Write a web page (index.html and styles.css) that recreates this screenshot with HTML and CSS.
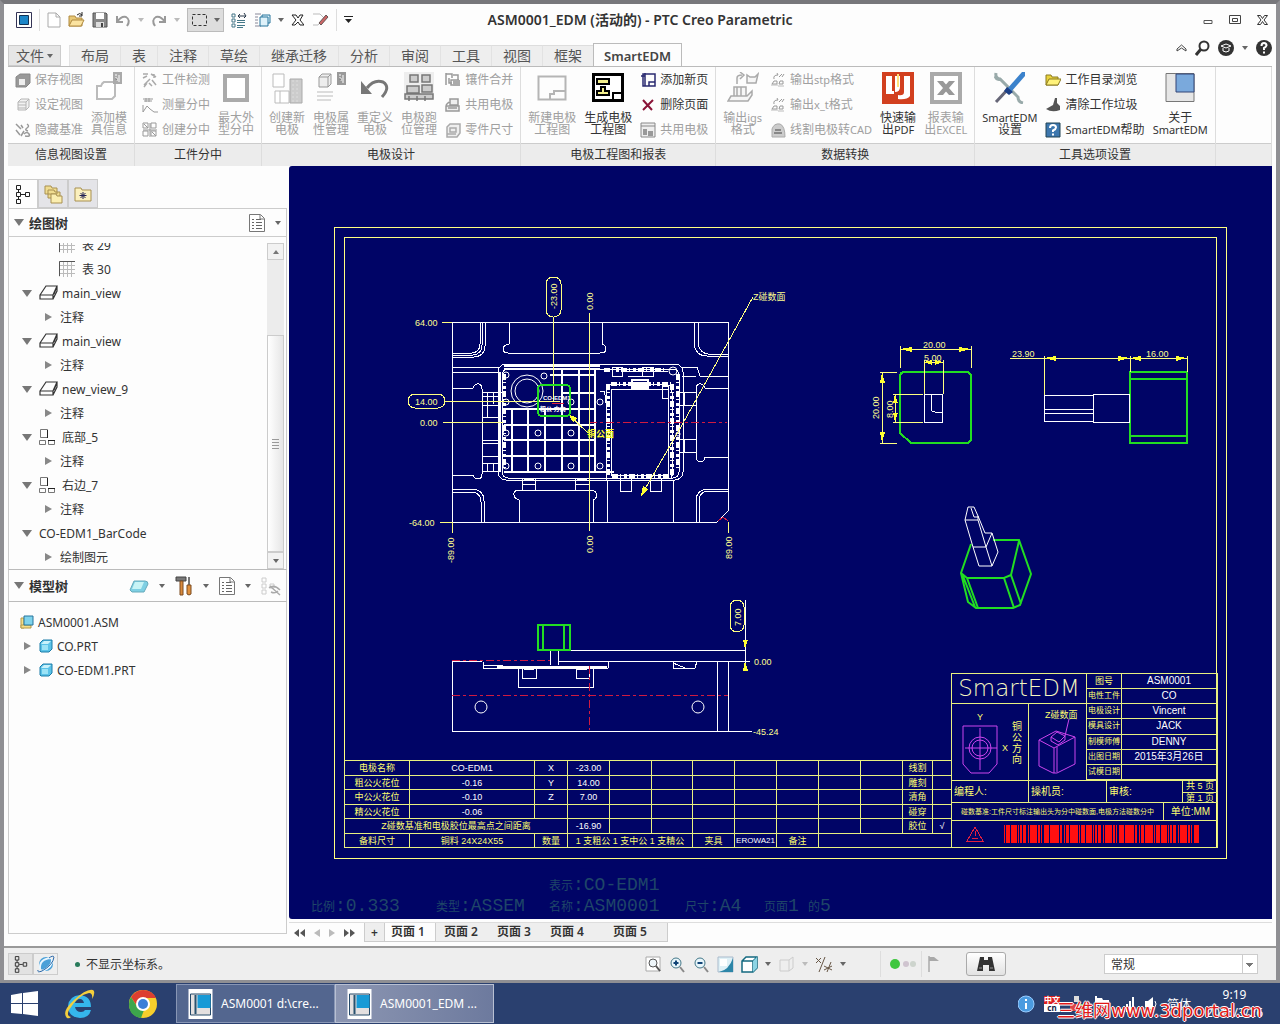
FILE: index.html
```html
<!DOCTYPE html>
<html lang="zh-CN">
<head>
    <meta charset="UTF-8">
    <meta name="viewport" content="width=device-width, initial-scale=1.0">
    <title>ASM0001_EDM (活动的) - PTC Creo Parametric</title>
    <link rel="stylesheet" href="styles.css">
</head>
<body>
    <!-- 公用图标 -->
    <svg class="defs" width="0" height="0" aria-hidden="true">
        <symbol id="i-view" viewBox="0 0 20 16"><path d="M1 10 7 1h11l-4 9v4H1zM1 10h13M18 1v5l-4 8M15 9l2-5" fill="none" stroke="#333" stroke-width="1.2"/></symbol>
        <symbol id="i-proj" viewBox="0 0 16 16"><path d="M1.500 .5h7v8h-7zM.5 11.500h6v4h-6zM9.500 11.500h6v4h-6z" fill="none" stroke="#777"/><path d="M9 11.500h7M8.500 1v8" stroke="#222"/></symbol>
        <symbol id="i-table" viewBox="0 0 16 16"><path d="M.5.500h15M.5.500v15M4.500 1v15M8.500 1v15M12.500 1v15M1 4.500h15M1 8.500h15M1 12.500h15" fill="none" stroke="#bbb"/><path d="M.5 15V.500H16" fill="none" stroke="#555"/></symbol>
        <symbol id="i-part" viewBox="0 0 14 14"><path d="M1 4 4 1h9v9l-3 3H2L1 12z" fill="#5bc3e8" stroke="#1d7ca8"/><path d="M2 5h7l3-3H5z" fill="#c9f2fb"/><path d="M3 6h6v5H3z" fill="#9be3f6"/></symbol>
        <symbol id="i-nodes" viewBox="0 0 16 20"><path d="M1.500 1.500h4v4h-4zM1.500 8.500h4v4h-4zM1.500 15.500h4v4h-4zM10.500 8.500h4v4h-4zM3.500 5.500v3M3.500 12.500v3M6 10.500h4" fill="none" stroke="#222"/></symbol>
        <symbol id="i-list" viewBox="0 0 16 18"><path d="M.5.500h11l4 4v13H.5zM11 1v4h4" fill="#fff" stroke="#777"/><path d="M3 5.500h2M3 8.500h2M3 11.500h2M3 14.500h2M7 5.500h5M7 8.500h6M7 11.500h6M7 14.500h6" stroke="#666"/></symbol>
        <symbol id="i-step" viewBox="0 0 16 16"><path d="M4 7q-1-4 4-4l-1-2M9 5l3-3M12 5l2-3M4 9h3v3H2zM10 9h3v3h-4z" fill="none" stroke="#999"/><path d="M1 13h7M8 14h6" stroke="#bbb"/></symbol>
        <symbol id="i-win" viewBox="0 0 24 30"><path d="M0 0h24v30H0z" fill="#fff"/><path d="M2 5h20v21H2z" fill="#e4e0e0" stroke="#254a6a"/><path d="M6 6h2v19H6z" fill="#29526f"/><path d="M9 6h13v13H9z" fill="#189ad6"/></symbol>
    </svg>

    <div class="window">
        <header class="titlebar">
            <div class="quick">
                <svg width="16" height="16"><path d="M.5.500h15v15H.5z" fill="#fff" stroke="#335"/><path d="M3.500 3.500h9v9h-9z" fill="#1c86c8" stroke="#135"/></svg>
                <i class="vline"></i>
                <svg width="14" height="16"><path d="M1 1h8l4 4v10H1zM9 1v4h4" fill="#fff" stroke="#aaa"/></svg>
                <svg width="17" height="16"><path d="M1 4h6l1 2h6v8H1z" fill="#e8c876" stroke="#b08a40"/><path d="M4 8h12l-3 6H1z" fill="#fbe3a0" stroke="#b08a40"/><path d="M9 3q3-3 5 0M14 0v4h-3" fill="none" stroke="#222"/></svg>
                <svg width="16" height="16"><path d="M1 1h13l1 1v13H1z" fill="#888" stroke="#555"/><path d="M4 1h8v6H4z" fill="#fff"/><path d="M4 10h8v5H4z" fill="#ddd"/><path d="M9 11h2v4H9z" fill="#444"/></svg>
                <svg width="16" height="14"><path d="M2 3v6h6M2 9Q6 3 11 4q5 3 1 9" fill="none" stroke="#999" stroke-width="2"/></svg>
                <i class="caret dim"></i>
                <svg width="16" height="14"><path d="M14 3v6H8M14 9Q10 3 5 4q-5 3-1 9" fill="none" stroke="#999" stroke-width="2"/></svg>
                <i class="caret dim"></i>
                <span class="picked"><svg width="17" height="14"><path d="M1.500 1.500h14v11h-14z" fill="none" stroke="#333" stroke-dasharray="3 2"/></svg><i class="caret"></i></span>
                <svg width="16" height="16"><path d="M1 2h3v3H1zM1 7h3v3H1zM1 12h3v3H1z" fill="none" stroke="#478"/><path d="M6 8.500h8M6 10.500h8M6 13.500h8M6 15.500h6" stroke="#478"/><path d="M7 4h7M9 2 7 4l2 2M13 1l2 3-2 2" fill="none" stroke="#234"/></svg>
                <svg width="17" height="16"><path d="M1 2h6M1 5h3M1 8h3M1 11h3M1 14h6" stroke="#889"/><path d="M6 5h8v9H6zM8 5V3h8v8h-2" fill="#dff2fa" stroke="#27749c"/></svg>
                <i class="caret"></i>
                <svg width="13" height="14"><path d="M1 2h4l2 3 2-3h3L9 7l4 5H9L7 9l-3 3H1l4-5z" fill="#fff" stroke="#222"/></svg>
                <svg width="18" height="16"><path d="M2 2h7l4 4-6 7H2" fill="#fff" stroke="#bbb"/><path d="m8 11 7-8 2 2-7 8z" fill="#c66" stroke="#655"/></svg>
                <i class="vline"></i>
                <svg width="9" height="8"><path d="M0 0h9v1H0zM1 3h7L4.500 7z" fill="#222"/></svg>
            </div>
            <h1>ASM0001_EDM (活动的) - PTC Creo Parametric</h1>
            <div class="winbtns">
                <button aria-label="最小化"><svg width="10" height="10"><path d="M1 5.500h8v3H1z" fill="none" stroke="#555"/></svg></button>
                <button aria-label="最大化"><svg width="12" height="10"><path d="M.5.500h11v8H.5zM3.500 3.500h5v3h-5z" fill="none" stroke="#444"/></svg></button>
                <button aria-label="关闭"><svg width="11" height="10"><path d="M.5.500h3l2 3 2-3h3L7 5l3.500 4.500h-3L5.500 6.500l-2 3h-3L4 5z" fill="none" stroke="#333"/></svg></button>
            </div>
        </header>

        <nav class="tabs">
            <a href="#" class="file">文件<i class="caret"></i></a>
            <a href="#">布局</a><a href="#">表</a><a href="#">注释</a><a href="#">草绘</a><a href="#">继承迁移</a><a href="#">分析</a><a href="#">审阅</a><a href="#">工具</a><a href="#">视图</a><a href="#">框架</a><a href="#" class="on">SmartEDM</a>
            <div class="helpers">
                <svg width="11" height="8"><path d="m1 5 4.500-4L10 5v2L5.500 4 1 7z" fill="#fff" stroke="#444"/></svg>
                <svg width="15" height="16"><circle cx="9" cy="6" r="4.500" fill="none" stroke="#333" stroke-width="2"/><path d="m6 9-5 6" stroke="#333" stroke-width="3"/></svg>
                <svg width="16" height="16"><circle cx="8" cy="8" r="8" fill="#333"/><path d="m3 6 5-2 5 2-5 2zM5 8v3q3 2 6 0V8" fill="#333" stroke="#fff"/></svg>
                <i class="caret"></i>
                <svg width="16" height="16"><circle cx="8" cy="8" r="8" fill="#333"/><path d="M5.500 6q0-3 2.500-3t2.500 2.500Q10 7 8 8v2M8 11.500v2" fill="none" stroke="#fff" stroke-width="2"/></svg>
            </div>
        </nav>

        <section class="ribbon">
            <div class="group">
                <div class="tools">
                    <div class="stack">
                        <button class="small" disabled><svg width="16" height="16"><path d="M1 5l4-3h10v9l-4 4H1z" fill="#999" stroke="#888"/><path d="M4 7h6v6H4z" fill="#eee"/></svg>保存视图</button>
                        <button class="small" disabled><svg width="16" height="16"><path d="M3 5l3-3h8v8l-3 3H3zM3 5h8v8M11 5l3-3M3 8h8M3 11h8" fill="#f2f2f2" stroke="#b5b5b5"/></svg>设定视图</button>
                        <button class="small" disabled><svg width="16" height="16"><path d="M1 2l5 5M1 8l4 5M6 3l2 3M9 9l-3 5M12 2q3 2 0 4t1 3M9 12q3-3 5 0t-4 2" fill="none" stroke="#999" stroke-width="1.500"/></svg>隐藏基准</button>
                    </div>
                    <button class="big" disabled><svg width="32" height="32"><path d="M4 14h4q1-3 3-4h11v14l-3 3H4z" fill="#fff" stroke="#bbb" stroke-width="2"/><path d="M20 0h9v12h-9z" fill="#aaa"/><path d="M22 3h2M26 3v7M22 6h2v3" stroke="#fff"/></svg>添加模<br>具信息</button>
                </div>
                <div class="caption">信息视图设置</div>
            </div>
            <div class="group">
                <div class="tools">
                    <div class="stack">
                        <button class="small" disabled><svg width="16" height="16"><path d="M1 2h5M1 6l4-2M2 13l6-6M9 2l5 3M10 8l4 5M2 15l3-4M12 2v4M7 11l3 3" stroke="#aaa" stroke-width="1.500"/></svg>工件检测</button>
                        <button class="small" disabled><svg width="16" height="16"><path d="M1 2h10M2 4h8M4 1v4M7 1v4M1 15l4-6 3 3 4 3h4M1 8v7" fill="none" stroke="#999"/></svg>测量分中</button>
                        <button class="small" disabled><svg width="16" height="16"><path d="M1 1h5v5H1zM9 1h5v5H9zM1 9h5v5H1zM9 9h5v5H9zM1 8h14M8 1v14M2 2l4 4M10 10l4 4" fill="none" stroke="#999"/></svg>创建分中</button>
                    </div>
                    <button class="big" disabled><svg width="32" height="32"><path d="M5 4h22v24H5z" fill="#fff" stroke="#aaa" stroke-width="4"/></svg>最大外<br>型分中</button>
                </div>
                <div class="caption">工件分中</div>
            </div>
            <div class="group">
                <div class="tools">
                    <button class="big" disabled><svg width="32" height="32"><path d="M2 2h11v13H2zM4 19h14v12H4zM9 19v12" fill="#fff" stroke="#bbb"/><path d="M19 7h12v24H19z" fill="#ccc" stroke="#aaa"/><path d="M22 8v22M26 8v22" stroke="#ddd" stroke-dasharray="2"/></svg>创建新<br>电极</button>
                    <button class="big" disabled><svg width="32" height="32"><path d="M4 5l3-3h9v10l-3 3H4zM4 5h9v10M13 5l3-3" fill="#eee" stroke="#999"/><path d="M2 20h16M2 24h16M2 28h14" stroke="#bbb"/><path d="M22 0h9v13h-9z" fill="#999"/><path d="M24 3h2M28 3v8M24 6h2v3" stroke="#fff"/></svg>电极属<br>性管理</button>
                    <button class="big" disabled><svg width="32" height="32"><path d="M8 16Q15 7 24 10q8 5-1 15" fill="none" stroke="#777" stroke-width="3"/><path d="M2 9v13h11z" fill="#777"/></svg>重定义<br>电极</button>
                    <button class="big" disabled><svg width="32" height="32"><path d="M1 0h30v22H1z" fill="#eee"/><path d="M7 3h8v7H7zM19 3h8v7h-8zM4 14h12v7H4zM19 13h10v7H19zM2 22h28v5H2zM6 24v5M14 24v5M22 24v5" fill="#ccc" stroke="#777" stroke-width="1.500"/></svg>电极跑<br>位管理</button>
                    <div class="stack">
                        <button class="small" disabled><svg width="16" height="16"><path d="M1 1v12M1 2h6v4M4 6v5h3M8 3h5v10H6v-5h8" fill="none" stroke="#999" stroke-width="1.500"/><path d="M8 8h7v6H8z" fill="#aaa"/></svg>镶件合并</button>
                        <button class="small" disabled><svg width="16" height="16"><path d="M1 8l3-3M5 2h8v6H5zM1 9h13v5H1zM3 11h9" fill="#eee" stroke="#999" stroke-width="1.500"/></svg>共用电极</button>
                        <button class="small" disabled><svg width="16" height="16"><path d="M2 5l3-3h10v9l-3 4H2zM5 6h6v4H5zM2 12h9" fill="#eee" stroke="#aaa" stroke-width="1.500"/></svg>零件尺寸</button>
                    </div>
                </div>
                <div class="caption">电极设计</div>
            </div>
            <div class="group">
                <div class="tools">
                    <button class="big" disabled><svg width="32" height="32"><path d="M2.500 4.500h27v23h-27zM14 27v-5h4v-3h11" fill="none" stroke="#b5b5b5" stroke-width="2"/></svg>新建电极<br>工程图</button>
                    <button class="big"><svg width="32" height="32"><path d="M1.500 2.500h29v26h-29z" fill="#fff" stroke="#000" stroke-width="3"/><path d="M5 7h12v5H5zM9 15h4v4h4v4H5v-4h4z" fill="#f4f08c" stroke="#000" stroke-width="2"/><path d="M21 28v-7h9" fill="none" stroke="#000" stroke-width="2"/></svg>生成电极<br>工程图</button>
                    <div class="stack">
                        <button class="small"><svg width="16" height="16"><path d="M3 2h12v12H3zM1 4h4M5 1v13M9 14v-4h6" fill="none" stroke="#2a2a70" stroke-width="1.500"/></svg>添加新页</button>
                        <button class="small"><svg width="16" height="16"><path d="m3 3 9 10M13 3 3 13" stroke="#8a1538" stroke-width="2"/></svg>删除页面</button>
                        <button class="small" disabled><svg width="16" height="16"><path d="M1 1h14v14H1zM1 4h14" fill="#eee" stroke="#888"/><path d="M3 7h4v6H3zM8 9h5v5H8z" fill="#999"/></svg>共用电极</button>
                    </div>
                </div>
                <div class="caption">电极工程图和报表</div>
            </div>
            <div class="group">
                <div class="tools">
                    <button class="big" disabled><svg width="32" height="32"><path d="M10 12V6q0-3 5-3M13 0l4 3-4 4M20 3v8h9l2-9-3 3h-5zM7 15h12v9H7zM4 24h16l5-5v4l-4 6H1zM10 15v9M14 15v9" fill="#f6f6f6" stroke="#aaa" stroke-width="1.500"/></svg>输出<span class="lat">igs</span><br>格式</button>
                    <div class="stack">
                        <button class="small" disabled><svg width="16" height="16"><use href="#i-step"/></svg><span>输出<span class="lat">stp</span>格式</span></button>
                        <button class="small" disabled><svg width="16" height="16"><use href="#i-step"/></svg><span>输出<span class="lat">x_t</span>格式</span></button>
                        <button class="small" disabled><svg width="16" height="16"><path d="M2 15V7q2-6 8-5 5 2 5 13z" fill="#ccc" stroke="#aaa"/><path d="M5 8h6M4 11h8" stroke="#888" stroke-width="2"/></svg><span>线割电极转<span class="lat">CAD</span></span></button>
                    </div>
                    <button class="big"><svg width="32" height="32"><path d="M0 0h32v32H0z" fill="#d2401f"/><path d="M4 4h6v17H4zM4 19h8v3H4zM13 4h5v11q0 5-5 5zM22 4h6v20q-3 4-12 3v-4q6 1 6-3z" fill="#fff"/><path d="M15 2h2v13h-2z" fill="#ffe27a"/></svg>快速输<br>出<span class="lat">PDF</span></button>
                    <button class="big" disabled><svg width="32" height="32"><path d="M2 2h28v28H2z" fill="#fff" stroke="#aaa" stroke-width="4"/><path d="M7 9h6l12 14h-6zM19 9h6L13 23H7z" fill="#999"/></svg>报表输<br>出<span class="lat">EXCEL</span></button>
                </div>
                <div class="caption">数据转换</div>
            </div>
            <div class="group">
                <div class="tools">
                    <button class="big"><svg width="32" height="32"><path d="M2 1q-1 5 4 6l18 18q0 5 5 6M1 4q2 5 6 3" fill="none" stroke="#9aa" stroke-width="3"/><path d="m2 30 13-14" stroke="#667" stroke-width="3"/><path d="m13 17 4 3L31 4V0h-3z" fill="#3b82cc"/><path d="m13 15 6 5-4 3-5-4z" fill="#1b3f86"/></svg><span class="lat">SmartEDM</span><br>设置</button>
                    <div class="stack">
                        <button class="small"><svg width="16" height="16"><path d="M1 3h5l1 2h6v8H1z" fill="#e9d23c" stroke="#8a7a20"/><path d="M4 7h12l-3 6H1z" fill="#fff27a" stroke="#8a7a20"/></svg>工作目录浏览</button>
                        <button class="small"><svg width="16" height="16"><path d="M10 1h2v5l3 3v4q-8 3-14-1l7-4z" fill="#555"/></svg>清除工作垃圾</button>
                        <button class="small"><svg width="16" height="16"><path d="M1 1h14v14H1z" fill="#3d77ae" stroke="#245"/><path d="M5 6q0-3 3-3t3 2.500Q11 7 8 8.500V10M8 11.500v2" fill="none" stroke="#fff" stroke-width="2"/></svg><span><span class="lat">SmartEDM</span>帮助</span></button>
                    </div>
                    <button class="big"><svg width="32" height="32"><path d="M2 1.500h28v28H2z" fill="#e6e6e6" stroke="#777"/><path d="M12 2h18v18H12z" fill="#7aa9dc" stroke="#347"/></svg>关于<br><span class="lat">SmartEDM</span></button>
                </div>
                <div class="caption">工具选项设置</div>
            </div>
            <div class="group rest"><div class="tools"></div><div class="caption"></div></div>
        </section>

        <main class="workspace">
            <aside class="side">
                <div class="sidetabs">
                    <button class="on" aria-label="模型树"><svg width="16" height="20"><use href="#i-nodes"/></svg></button>
                    <button aria-label="文件夹"><svg width="20" height="20"><path d="M2 2h6l1 2h5v6H2zM5 6h6l1 2h5v6H5z" fill="#f0dc90" stroke="#a89050"/><path d="M8 10h5l1 2h5v7H8z" fill="#fbeeb0" stroke="#a89050"/></svg></button>
                    <button aria-label="收藏夹"><svg width="18" height="16"><path d="M1 2h6l1 2h9v11H1z" fill="#fbf0be" stroke="#a89050"/><path d="M9 6v7M5.500 9.500h7M6.500 7l5 5M11.500 7l-5 5" stroke="#225"/></svg></button>
                </div>
                <div class="panelhead"><i class="caret wide"></i><h2>绘图树</h2><span class="push"></span><svg width="16" height="18"><use href="#i-list"/></svg><i class="caret"></i></div>
                <div class="treebox">
                    <ul class="tree bottom">
                        <li class="l3"><svg width="16" height="16"><use href="#i-table"/></svg>表 29</li>
                        <li class="l3"><svg width="16" height="16"><use href="#i-table"/></svg>表 30</li>
                        <li class="l1"><i class="caret wide"></i><svg width="20" height="16"><use href="#i-view"/></svg>main_view</li>
                        <li class="l2"><i class="closed"></i>注释</li>
                        <li class="l1"><i class="caret wide"></i><svg width="20" height="16"><use href="#i-view"/></svg>main_view</li>
                        <li class="l2"><i class="closed"></i>注释</li>
                        <li class="l1"><i class="caret wide"></i><svg width="20" height="16"><use href="#i-view"/></svg>new_view_9</li>
                        <li class="l2"><i class="closed"></i>注释</li>
                        <li class="l1"><i class="caret wide"></i><svg class="pad" width="16" height="16"><use href="#i-proj"/></svg>底部_5</li>
                        <li class="l2"><i class="closed"></i>注释</li>
                        <li class="l1"><i class="caret wide"></i><svg class="pad" width="16" height="16"><use href="#i-proj"/></svg>右边_7</li>
                        <li class="l2"><i class="closed"></i>注释</li>
                        <li class="l1"><i class="caret wide"></i>CO-EDM1_BarCode</li>
                        <li class="l2"><i class="closed"></i>绘制图元</li>
                    </ul>
                    <div class="scroll">
                        <button aria-label="向上"><i class="up"></i></button>
                        <div class="trough"></div>
                        <div class="thumb"></div>
                        <button aria-label="向下"><i class="caret"></i></button>
                    </div>
                </div>
                <div class="panelhead second"><i class="caret wide"></i><h2>模型树</h2><span class="push"></span>
                    <svg width="20" height="16"><path d="M1 12 5 3h11q3 0 3 3l-4 8H3z" fill="#7fd0e4" stroke="#6ab"/><path d="M3 11 6 4h9l-3 7z" fill="#c8f4f6"/></svg><i class="caret"></i>
                    <svg width="18" height="22"><path d="M1 2h10v4H1z" fill="#777" stroke="#444"/><path d="M5 6h3v14H5z" fill="#d98a3c" stroke="#7a4a20"/><path d="M13 2h2v8h-2z" fill="#777"/><path d="M12 10h4v9q-2 2-4 0z" fill="#e0903c" stroke="#7a4a20"/></svg><i class="caret"></i>
                    <svg width="16" height="20"><use href="#i-list"/></svg><i class="caret"></i>
                    <svg width="20" height="20"><path d="M1 2h4v4H1zM1 8h4v4H1zM1 14h4v4H1zM9 8h4v4H9z" fill="none" stroke="#ccc"/><path d="M8 12q5-4 11 2M10 16q4 2 7-1M9 10l10 9" fill="none" stroke="#aaa" stroke-width="1.500"/></svg>
                </div>
                <ul class="tree model">
                    <li class="l0"><svg width="14" height="14"><path d="M1 3h3v10H1z" fill="#f7df8a" stroke="#b59a48"/><path d="M1 10h10v3H1z" fill="#f7df8a" stroke="#b59a48"/><path d="M4 1h9v9H4z" fill="#7fd3ec" stroke="#27749c"/></svg>ASM0001.ASM</li>
                    <li class="l1"><i class="closed"></i><svg width="14" height="14"><use href="#i-part"/></svg>CO.PRT</li>
                    <li class="l1"><i class="closed"></i><svg width="14" height="14"><use href="#i-part"/></svg>CO-EDM1.PRT</li>
                </ul>
            </aside>

            <section class="content">
                <svg class="drawing" viewBox="289 166 983 753">
                    <!-- 图框 -->
                    <path class="y" d="M334 227h892v631H334zM344 237h872v610H344z"/>

                    <!-- 主视图 -->
                    <g class="w">
                        <path d="M452 322h276v189l-11 11H452z"/>
                        <path d="M480 322v22q0 8-8 9h-20M482 322v23q0 9-9 10h-21M485 322v24q0 10-11 11h-22M694 322v22q2 12 13 12h21M698 322v22q2 9 10 10h20M452 489h20q12 1 12 12v21M452 492h20q9 1 9 10v20M728 489h-20q-12 1-12 12v21M728 491h-20q-9 1-9 10v21"/>
                        <path d="M509 322v22q-6 1-6 5 0 4 5 4h92q6 0 6-4 0-4-4-5v-22M519 522v-22q-6-2-5-7 1-3 5-3h72q6 1 6 6-1 3-4 4v22"/>
                        <path d="M452 388h21q2-5 6-4 3 1 3 5v85q0 5-4 5-4 0-5-4h-21M728 388h-23q-2-5-6-4-3 1-3 5v69q1 4 5 4 4-1 4-5h23"/>
                        <path d="M452 367h48M452 372h48M482 392h20M482 396h18M482 405h18M482 417h16M482 440h16M482 443h16M482 456h18M482 463h18M482 471h16M487 392v25M493 392v12M487 463v8M493 463v8M682 367h15l3 9h28M682 376h14M679 392h17v13h-17zM684 392v13M679 439h17v13h-17zM684 439v13"/>
                        <rect x="498" y="364" width="185" height="116" rx="8"/>
                        <rect x="502" y="369" width="177" height="109" rx="6"/>
                        <path class="b" d="M500 372v100M504 369h96M504 366h96M512 410v62M528 410v62M545 410v62M562 368v104M579 368v104M595 368v104M504 409h91M504 425h91M504 440h91M504 456h91M504 472h110M550 375h45M562 393h33"/>
                        <path class="rag" d="M608 384v92M672 384v92M612 476h60M504 374v94M678 374v94M604 370h60M611 384h60"/>
                        <path d="M611 389h57v86h-57zM606 480v-88q0-8 8-8h50q8 0 8 8v84M612 367h10v9h-10zM642 367h11v9h-11zM628 376h24M624 371h44M607 480v42M673 480v42M522 478h13v12h-13zM575 478h14v12h-14zM620 478h11v13h-11zM650 478h11v13h-11zM522 484h13M575 484h14M662 386h6v12h-6zM600 392q5-3 5 3v8"/>
                        <path class="b" d="M632 380h16v8h-16zM633 383h14M633 386h14M524 480h10M577 480h10"/>
                        <circle cx="527" cy="391" r="16"/><circle cx="527" cy="391" r="12"/>
                        <circle cx="506" cy="375" r="3"/><circle cx="544" cy="376" r="3"/><circle cx="506" cy="402" r="3"/><circle cx="571" cy="402" r="3"/><circle cx="600" cy="402" r="3"/>
                        <circle cx="506" cy="433" r="3"/><circle cx="538" cy="433" r="3"/><circle cx="571" cy="433" r="3"/><circle cx="506" cy="466" r="3"/><circle cx="538" cy="466" r="3"/><circle cx="571" cy="466" r="3"/><circle cx="600" cy="466" r="3"/><circle cx="673" cy="371" r="4"/><circle cx="678" cy="434" r="2"/>
                    </g>
                    <path class="r" d="M589 422h138"/>
                    <path class="r" d="M589 394v46"/>
                    <path class="y" d="M553 317v84M589 313v218M445 401h115M443 422h60M442 322h10M440 522h12M452 522v11M728 522v11M753 297l-71 128-41 71M568 414l20 19"/>
                    <path class="yf" d="m641 496 2-10 5 3zM568 414l9 4-4 4z"/>
                    <rect class="g" x="538" y="385" width="32" height="31" rx="4"/>
                    <rect class="y" x="546" y="277" width="15" height="40" rx="7"/>
                    <rect class="y" x="408" y="394" width="37" height="14" rx="7"/>
                    <g class="dim">
                        <text x="415" y="326">64.00</text><text x="415" y="405">14.00</text><text x="420" y="426">0.00</text><text x="409" y="526">-64.00</text>
                        <text transform="translate(557 309) rotate(-90)">-23.00</text><text transform="translate(593 310) rotate(-90)">0.00</text>
                        <text transform="translate(454 563) rotate(-90)">-89.00</text><text transform="translate(593 553) rotate(-90)">0.00</text><text transform="translate(732 559) rotate(-90)">89.00</text>
                        <text x="753" y="300">Z碰数面</text>
                        <text class="key" x="587" y="437">铜公面</text>
                    </g>
                    <g class="tiny"><text x="543" y="400">CO-EDM1</text><text x="540" y="411">粗公 方向</text></g>
                    <path class="red" d="M552 403h12M718 521l5-4 5 4"/>

                    <!-- 侧视图 -->
                    <g class="w">
                        <path d="M482 661H452v70h300M728 661v70M717 661v70M558 661h192M550 651v14M558 651v14M483 662v6h125M483 665h20M608 661v7M518 668v19h75v-19M673 661v7h22l2-7M673 663l12 5M522 668h14v10h-14zM576 668h13v10h-13z"/>
                        <path class="b" d="M497 667h110M524 669h10M577 669h10"/>
                        <circle cx="481" cy="707" r="6"/><circle cx="698" cy="707" r="6"/>
                        <path d="M570 650h175M745 600v71"/>
                    </g>
                    <path class="r" d="M452 660h98"/>
                    <path class="r" d="M452 695h276"/>
                    <path class="r" d="M589 666v64"/>
                    <path class="g" d="M538 625h32v25h-32zM543 625v25M564 625v25"/>
                    <rect class="y" x="730" y="600" width="14" height="32" rx="7"/>
                    <path class="yf" d="m745 649-2-9h5zM745 661l-2 10h5z"/>
                    <g class="dim">
                        <text transform="translate(741 626) rotate(-90)">7.00</text><text x="754" y="665">0.00</text><text x="753" y="735">-45.24</text>
                    </g>

                    <!-- 电极视图 -->
                    <path class="g" d="M905 372h61q5 0 5 5v61q0 5-5 5h-55l-11-10v-56q0-5 5-5zM1130 372h57v71h-57zM1130 379h57M1130 436h57"/>
                    <path class="w" d="M924 394h18v28h-18zM931 394v14q0 4 4 4h7M1044 395h49v26h-49zM1044 409h49M1044 413h49M1093 394h36v28h-36z"/>
                    <path class="y" d="M900 349h71M900 346v22M971 346v22M924 362h19M924 360v34M943 360v34M882 372v71M880 372h17M880 443h17M895 394v28M893 394h30M893 422h30M1010 358h177M1044 356v39M1130 356v16M1187 356v16"/>
                    <path class="yf" d="m900 349 12-2v5zM971 349l-12-2v5zM924 362l8-2v5zM943 362l-8-2v5zM882 372l-2 11h5zM882 443l-2-11h5zM895 394l-2 9h5zM895 422l-2-9h5zM1044 358l12-2v5zM1130 358l-12-2v5zM1130 358l11-2v5zM1187 358l-11-2v5z"/>
                    <g class="dim">
                        <text x="923" y="348">20.00</text><text x="924" y="361">5.00</text><text x="1012" y="357">23.90</text><text x="1146" y="357">16.00</text>
                        <text transform="translate(879 419) rotate(-90)">20.00</text><text transform="translate(893 418) rotate(-90)">8.00</text>
                    </g>
                    <path class="g iso" d="M993 540h26l12 34-11 31-7 3h-37l-8-6-7-29 10-29M961 573l6 5h37l7-3 8-34M1004 578l10 30M1011 575l10 29M963 576l12 31M967 578l11 30"/>
                    <path class="w iso" d="M965 520l3-13h6l4 9v4h-13l8 27 6 19h13l6-14-6-19h-7M978 516l7 17M978 520l8 27h-13M986 547l6 19M986 547l6-14M971 508l3 9h5"/>

                    <!-- 电极参数表 -->
                    <foreignObject x="344" y="760" width="608" height="90">
                        <table class="params">
                            <colgroup><col class="c65"><col class="c125"><col class="c33"><col class="c42"><col class="c42"><col class="c41"><col class="c42"><col class="c42"><col class="c42"><col class="c42"><col class="c42"><col class="c30"><col class="c19"></colgroup>
                            <tr><th>电极名称</th><td>CO-EDM1</td><td>X</td><td>-23.00</td><td></td><td></td><td></td><td></td><td></td><td></td><td></td><th>线割</th><td></td></tr>
                            <tr><th>粗公火花位</th><td>-0.16</td><td>Y</td><td>14.00</td><td></td><td></td><td></td><td></td><td></td><td></td><td></td><th>雕刻</th><td></td></tr>
                            <tr><th>中公火花位</th><td>-0.10</td><td>Z</td><td>7.00</td><td></td><td></td><td></td><td></td><td></td><td></td><td></td><th>清角</th><td></td></tr>
                            <tr><th>精公火花位</th><td>-0.06</td><td></td><td></td><td></td><td></td><td></td><td></td><td></td><td></td><td></td><th>碰穿</th><td></td></tr>
                            <tr><th colspan="3">Z碰数基准和电极胶位最高点之间距离</th><td>-16.90</td><td></td><td></td><td></td><td></td><td></td><td></td><td></td><th>胶位</th><td>√</td></tr>
                            <tr><th>备料尺寸</th><th>铜料 24X24X55</th><th>数量</th><th colspan="3">1 支粗公 1 支中公 1 支精公</th><th>夹具</th><td class="narrow">EROWA21</td><th>备注</th><td colspan="4"></td></tr>
                        </table>
                    </foreignObject>

                    <!-- 标题栏 -->
                    <foreignObject x="951" y="673" width="267" height="176">
                        <div class="titleblock">
                            <div class="upper">
                                <div class="brand">SmartEDM</div>
                                <div class="figs">
                                    <div class="fig a">
                                        <svg width="76" height="75"><path class="m" d="M11 22h34v38l-8 9H19l-8-9zM28 24v42M13 44h32"/><circle class="m" cx="28" cy="44" r="11"/><circle class="m" cx="28" cy="44" r="8"/><text x="25" y="16">Y</text><text x="50" y="47">X</text></svg>
                                        <span>铜公方向</span>
                                    </div>
                                    <div class="fig">
                                        <svg width="56" height="75"><path class="m" d="m10 36 17-9 19 6v27l-18 9h-4L10 62zM10 36l15 8 21-11M25 44v25M28 43v25M22 33l6-5 8 4-6 6zM22 33v4l7 4 7-5v-4"/><path class="m" d="m40 15-4 17"/><text x="16" y="14">Z碰数面</text></svg>
                                    </div>
                                </div>
                                <table class="info">
                                    <tr><th>图号</th><td>ASM0001</td></tr>
                                    <tr><th class="s">电性工件</th><td>CO</td></tr>
                                    <tr><th class="s">电极设计</th><td>Vincent</td></tr>
                                    <tr><th class="s">模具设计</th><td>JACK</td></tr>
                                    <tr><th class="s">制模师傅</th><td>DENNY</td></tr>
                                    <tr><th class="s">出图日期</th><td>2015年3月26日</td></tr>
                                    <tr><th class="s">试模日期</th><td></td></tr>
                                </table>
                            </div>
                            <div class="signs"><span>编程人:</span><span>操机员:</span><span>审核:</span><span class="pages"><b>共 5 页</b><b>第 1 页</b></span></div>
                            <div class="note"><span>碰数基准:工件尺寸标注输出头为分中碰数面,电极方法碰数分中</span><span>单位:MM</span></div>
                            <div class="code">
                                <svg width="18" height="16"><path class="warn" d="M9 1 17 15H1zM9 5v5M6 12h6"/></svg>
                                <svg width="195" height="18"><path class="bars" d="M0 9h195"/></svg>
                            </div>
                        </div>
                    </foreignObject>

                    <g class="foot">
                        <text x="549" y="890"><tspan class="cn">表示</tspan>:CO-EDM1</text>
                        <text x="311" y="911"><tspan class="cn">比例</tspan>:0.333</text>
                        <text x="436" y="911"><tspan class="cn">类型</tspan>:ASSEM</text>
                        <text x="549" y="911"><tspan class="cn">名称</tspan>:ASM0001</text>
                        <text x="685" y="911"><tspan class="cn">尺寸</tspan>:A4</text>
                        <text x="764" y="911"><tspan class="cn">页面</tspan>1</text>
                        <text x="808" y="911"><tspan class="cn">的</tspan>5</text>
                    </g>
                </svg>

                <nav class="pages-bar">
                    <div class="arrows">
                        <button aria-label="首页"><svg width="11" height="8"><path d="M5 0v8L0 4zM11 0v8L6 4z" fill="#555"/></svg></button>
                        <button aria-label="上一页"><svg width="6" height="8"><path d="M6 0v8L0 4z" fill="#bbb"/></svg></button>
                        <button aria-label="下一页"><svg width="6" height="8"><path d="M0 0v8l6-4z" fill="#bbb"/></svg></button>
                        <button aria-label="末页"><svg width="11" height="8"><path d="M0 0v8l5-4zM6 0v8l5-4z" fill="#555"/></svg></button>
                    </div>
                    <button class="add">+</button>
                    <a href="#" class="on">页面 1</a><a href="#">页面 2</a><a href="#">页面 3</a><a href="#">页面 4</a><a href="#" class="last">页面 5</a>
                </nav>
            </section>
        </main>

        <footer class="status">
            <button class="toggle" aria-label="导航器"><svg width="14" height="18"><use href="#i-nodes"/></svg></button>
            <button class="toggle" aria-label="浏览器"><svg width="18" height="18"><circle cx="9" cy="9" r="7" fill="#4aa0d8"/><path d="M3 14Q2 4 14 3M5 16Q16 12 15 4" fill="none" stroke="#e8f6ff" stroke-width="2"/><path d="M1 15q-1 3 4 1Q16 10 17 2q-1-2-5 1" fill="none" stroke="#2b68a8"/></svg></button>
            <p class="msg"><i></i>不显示坐标系。</p>
            <div class="viewtools">
                <svg width="17" height="17"><path d="M1 1h14v14H1z" fill="#fff" stroke="#aaa"/><circle cx="8" cy="7" r="4" fill="#eef6fa" stroke="#555"/><path d="m11 10 4 5" stroke="#555" stroke-width="2"/></svg>
                <svg width="17" height="17"><circle cx="7" cy="7" r="5" fill="#e8f6fb" stroke="#478"/><path d="M4.500 7h5M7 4.500v5" stroke="#147" stroke-width="2"/><path d="m11 11 4 5" stroke="#888" stroke-width="2"/></svg>
                <svg width="17" height="17"><circle cx="7" cy="7" r="5" fill="#e8f6fb" stroke="#478"/><path d="M4.500 7h5" stroke="#147" stroke-width="2"/><path d="m11 11 4 5" stroke="#888" stroke-width="2"/></svg>
                <svg width="17" height="17"><path d="M1 1h15v15H1z" fill="#dff0f6" stroke="#abc"/><path d="M16 2v14H2q10-2 14-14z" fill="#2d86a8"/><path d="M3 3h7v7H3z" fill="#fff"/></svg>
                <svg width="17" height="17"><path d="m1 5 4-4h11v11l-4 4H1zM1 5h11v11M12 5l4-4" fill="#fff" stroke="#146a80" stroke-width="1.500"/><path d="m12 5 4-4v11l-4 4z" fill="#8cd4e4"/></svg>
                <i class="caret"></i>
                <svg width="17" height="17"><path d="M2 4h9v11H2zM11 4l4-3v11l-4 3" fill="#eee" stroke="#ccc"/></svg>
                <i class="caret dim"></i>
                <svg width="18" height="17"><path d="m1 2 5 5M6 2 1 7M10 1 4 16M16 6l-4 10M9 10l8 4M9 14l8-4" stroke="#665544"/></svg>
                <i class="caret"></i>
            </div>
            <i class="sep"></i>
            <svg class="dots" width="28" height="14"><circle cx="6" cy="7" r="5" fill="#3ec63e"/><circle cx="17" cy="7" r="3" fill="#cfc4cf"/><circle cx="24" cy="7" r="3" fill="#cdd4cd"/></svg>
            <i class="sep"></i>
            <svg class="flag" width="12" height="16"><path d="M1 0v16" stroke="#888"/><path d="M1 1h5l5 4H1z" fill="#a9a9a9"/></svg>
            <button class="find" aria-label="查找"><svg width="18" height="16"><path d="M3 1h4v3h4V1h4l3 14h-6V9H6v6H0z" fill="#333"/><path d="M2 12h3M13 12h3" stroke="#999"/></svg></button>
            <select class="filter" aria-label="过滤器"><option>常规</option></select>
        </footer>
    </div>

    <div class="taskbar">
        <button class="launch" aria-label="开始"><svg width="28" height="26"><path d="m0 4 11-2v10H0zM12 2l15-2v12H12zM0 13h11v10L0 22zM12 13h15v12l-15-2z" fill="#fff"/></svg></button>
        <button class="launch ie" aria-label="Internet Explorer"><svg width="32" height="32"><path d="M24 19H11q1 5 6 5 3 0 4-2h6q-2 8-11 8Q4 29 4 18 5 8 16 7q11 1 11 12zM11 15h9q-1-4-4-4-4 0-5 4z" fill="#35b6ec"/><path d="M3 30q-6-6 7-18Q23 0 29 2q3 2-1 9 1-6-3-6Q14 7 5 22q-3 6 2 7-2 2-4 1z" fill="#f4cf3c"/></svg></button>
        <button class="launch chrome" aria-label="Chrome"><svg width="28" height="28"><circle cx="14" cy="14" r="14" fill="#f7cf2c"/><path d="M2 7Q7 0 14 0q9 0 13 8H14L8 16z" fill="#dd3f30"/><path d="M2 7 9 18l6 2-3 8Q0 26 0 14q0-4 2-7z" fill="#3da64c"/><circle cx="14" cy="14" r="7" fill="#fff"/><circle cx="14" cy="14" r="5" fill="#3c7fd8"/></svg></button>
        <button class="task"><svg width="25" height="30"><use href="#i-win"/></svg>ASM0001 d:\cre...</button>
        <button class="task on"><svg width="25" height="30"><use href="#i-win"/></svg>ASM0001_EDM ...</button>
        <div class="tray">
            <svg width="17" height="18"><circle cx="8" cy="9" r="8" fill="#4b9be0" stroke="#9cf"/><path d="M8 4v2M8 8v6" stroke="#fff" stroke-width="2"/></svg>
            <span class="ime"><b>中文</b><b>cn</b></span>
            <svg width="16" height="18"><path d="M5 1h5v6H5z" fill="#ddd"/><path d="M1 9h7v7H1z" fill="#d44"/><path d="M9 9h6v7H9z" fill="#4b4"/></svg>
            <svg width="16" height="18"><path d="M2 1v16" stroke="#fff" stroke-width="2"/><path d="M3 3h5l1 2h6v6H9L8 9H3z" fill="#fff"/></svg>
            <svg width="16" height="16"><path d="M2 16v-3M5 16v-5M8 16V8M11 16V5M14 16V1" stroke="#fff" stroke-width="2"/></svg>
            <svg width="14" height="16"><path d="M1 5h3l5-4v14l-5-4H1z" fill="#fff"/><path d="M11 5q2 3 0 6" fill="none" stroke="#fff"/></svg>
            <span class="lang">简体</span>
            <time><span>9:19</span><span>2015/3/26</span></time>
        </div>
        <div class="watermark">三维网www.3dportal.cn</div>
    </div>
</body>
</html>
```
FILE: styles.css
```css
* {
    box-sizing: border-box;
}
body {
    margin: 0;
    min-height: 100vh;
    display: flex;
    flex-direction: column;
    font-family: "Noto Sans", "Noto Sans CJK SC", sans-serif;
    font-size: 12px;
    color: #333;
    background-color: #2a406f;
}
button {
    font: inherit;
    color: inherit;
    background: none;
    border: none;
    padding: 0;
}
a {
    color: inherit;
    text-decoration: none;
}
h1, h2, p, ul {
    margin: 0;
    padding: 0;
}
svg {
    flex: none;
    display: block;
}
.defs {
    position: absolute;
}
.caret {
    flex: none;
    border: 3px solid transparent;
    border-top: 4px solid #666;
    border-bottom: 0;
}
.caret.dim {
    border-top-color: #bbb;
}
.caret.wide {
    border-width: 7px 5px 0;
    border-top-color: #777;
}
.closed {
    flex: none;
    border: 4px solid transparent;
    border-left: 7px solid #888;
    border-right: 0;
}
.up {
    border: 3px solid transparent;
    border-bottom: 4px solid #777;
    border-top: 0;
}

/* 主窗口 */
.window {
    flex: 1;
    display: flex;
    flex-direction: column;
    background-color: #fdfdfd;
    border: solid #8f8f93;
    border-width: 4px 4px 3px;
    border-top-color: #77777b;
}
.titlebar {
    position: relative;
    height: 38px;
    display: flex;
    align-items: center;
    padding: 0 8px 6px 12px;
}
.titlebar h1 {
    position: absolute;
    left: 0;
    right: 0;
    text-align: center;
    font-size: 14px;
    font-weight: 600;
    line-height: 20px;
    pointer-events: none;
}
.quick {
    display: flex;
    align-items: center;
    gap: 7px;
}
.vline {
    width: 1px;
    height: 22px;
    background-color: #ddd;
}
.picked {
    display: flex;
    align-items: center;
    gap: 6px;
    height: 24px;
    padding: 0 3px;
    background-color: #ddd;
    border: 1px solid #bbb;
}
.winbtns {
    margin-left: auto;
    display: flex;
    gap: 16px;
    align-items: center;
}

/* 功能区选项卡 */
.tabs {
    height: 24px;
    display: flex;
    align-items: flex-end;
    padding: 0 4px;
    font-size: 14px;
    color: #555;
}
.tabs a {
    height: 21px;
    line-height: 20px;
    padding: 0 11px;
    background-color: #eee;
    border-left: 1px solid #e2e2e2;
    border-top: 1px solid #ddd;
}
.tabs .file {
    display: flex;
    align-items: center;
    gap: 3px;
    padding: 0 7px;
    margin-right: 8px;
    background-color: #e6e6e6;
    border: 1px solid #ccc;
}
.tabs .on {
    height: 24px;
    line-height: 25px;
    padding: 0 10px;
    margin-bottom: -1px;
    font-size: 13px;
    font-weight: 600;
    color: #444;
    background-color: #fdfdfd;
    border: 1px solid #bbb;
    border-bottom: 0;
}
.helpers {
    margin-left: auto;
    display: flex;
    align-items: center;
    gap: 8px;
    padding-bottom: 10px;
}

/* 功能区 */
.ribbon {
    height: 100px;
    margin: 0 4px;
    display: flex;
    border-top: 1px solid #bbb;
}
.group {
    display: flex;
    flex-direction: column;
    border-right: 1px solid #ddd;
}
.rest {
    flex: 1;
}
.tools {
    flex: 1;
    display: flex;
    gap: 8px;
    padding: 0 7px;
}
.caption {
    height: 23px;
    line-height: 22px;
    text-align: center;
    background-color: #ececec;
    border-top: 1px solid #ccc;
}
.small {
    height: 25px;
    display: flex;
    align-items: center;
    gap: 4px;
    line-height: 12px;
    white-space: nowrap;
}
.big {
    align-self: flex-start;
    padding-top: 5px;
    line-height: 12px;
    white-space: nowrap;
    text-align: center;
}
.big svg {
    margin: 0 auto 8px;
}
.lat {
    font-size: 11px;
}
.tools button:disabled {
    color: #a0a0a0;
}

/* 左侧导航 */
.workspace {
    flex: 1;
    display: flex;
    padding: 0 4px;
}
.side {
    width: 281px;
    flex: none;
    display: flex;
    flex-direction: column;
    padding: 13px 2px 12px 0;
}
.sidetabs {
    display: flex;
    height: 29px;
}
.sidetabs button {
    width: 30px;
    display: flex;
    align-items: center;
    justify-content: center;
    background-color: #e4e4e8;
    border: 1px solid #ccc;
}
.sidetabs .on {
    background-color: #fdfdfd;
    border-bottom: 0;
}
.panelhead {
    height: 29px;
    display: flex;
    align-items: center;
    gap: 10px;
    padding: 0 5px;
    border: 1px solid #ccc;
}
.panelhead h2 {
    margin-left: -5px;
    font-size: 13px;
    line-height: 16px;
}
.panelhead.second {
    height: 33px;
    border-color: #bbb #ccc;
}
.push {
    flex: 1;
}
.treebox {
    height: 332px;
    display: flex;
    padding: 6px 2px 0 0;
    border: solid #ccc;
    border-width: 0 1px;
}
.tree {
    list-style: none;
    flex: 1;
    display: flex;
    flex-direction: column;
    overflow: hidden;
}
.tree.bottom {
    justify-content: flex-end;
}
.tree li {
    flex: none;
    height: 24px;
    display: flex;
    align-items: center;
}
.tree svg {
    margin-right: 3px;
}
.tree .pad {
    margin-right: 7px;
}
.l0 {
    padding-left: 11px;
}
.l1 {
    padding-left: 13px;
}
.l1 .caret {
    margin-right: 7px;
}
.l1 .closed {
    margin: 0 8px 0 2px;
}
.l2 {
    padding-left: 36px;
}
.l2 .closed {
    margin-right: 8px;
}
.l3 {
    padding-left: 50px;
}
.tree .l3 svg {
    margin-right: 7px;
}
.tree.model {
    padding-top: 8px;
    border: 1px solid #ccc;
    border-top: 0;
}
.tree.model svg {
    margin-right: 4px;
}
.scroll {
    width: 17px;
    display: flex;
    flex-direction: column;
}
.scroll button {
    height: 17px;
    display: flex;
    align-items: center;
    justify-content: center;
    background-color: #f2f2f2;
    border: 1px solid #ccc;
}
.trough {
    height: 75px;
    background-color: #ececec;
}
.thumb {
    flex: 1;
    display: flex;
    align-items: center;
    justify-content: center;
    background: linear-gradient(to right, #fff, #e6e6e6);
    border: 1px solid #ccc;
}
.thumb::before {
    content: "";
    width: 7px;
    height: 10px;
    background: repeating-linear-gradient(#999 0 1px, transparent 1px 3px);
}

/* 绘图区 */
.content {
    flex: 1;
    min-width: 0;
}
.drawing {
    width: 100%;
    height: auto;
    background-color: #000466;
    border-radius: 3px 0 0 3px;
    shape-rendering: crispEdges;
}
.drawing path, .drawing rect, .drawing circle {
    fill: none;
}
.drawing circle, .drawing .iso {
    shape-rendering: auto;
}
.drawing .w, .drawing .w path {
    stroke: #fff;
}
.drawing .w .b {
    stroke-width: 2;
}
.drawing .w .rag {
    stroke-width: 4;
    stroke-dasharray: 6 2 1 3 3 2;
}
.drawing .w circle, .drawing .w rect {
    stroke: #fff;
}
.drawing .y {
    stroke: #ffff80;
}
.drawing .yf {
    fill: #ffff33;
}
.drawing .g {
    stroke: #22dd22;
    stroke-width: 2;
}
.drawing .r {
    stroke: #d01a40;
    stroke-dasharray: 8 3 3 3;
}
.drawing .red, .drawing .warn {
    stroke: #e02040;
}
.drawing .m {
    stroke: #cc44ee;
    shape-rendering: auto;
}
.dim {
    font: 9px "Liberation Sans", "Noto Sans CJK SC", sans-serif;
    fill: #ffff90;
}
.dim .key {
    font-weight: 700;
    fill: #ffff20;
}
.tiny {
    font: bold 6px "Liberation Sans", "Noto Sans CJK SC", sans-serif;
    fill: #fff;
}
.foot {
    font: 18px "Liberation Mono", "Noto Sans CJK SC", monospace;
    fill: #1f4668;
}
.foot .cn {
    font-size: 12px;
}

/* 图纸表格 */
.params, .info {
    border-collapse: collapse;
    table-layout: fixed;
    font: 9px "Liberation Sans", "Noto Sans CJK SC", sans-serif;
    line-height: 12px;
    color: #fff;
}
.params {
    width: 608px;
}
.params td, .params th, .info td, .info th {
    padding: 0;
    border: 1px solid #e8f080;
    text-align: center;
    font-weight: 400;
    white-space: nowrap;
    overflow: hidden;
}
.params th, .info th {
    color: #ffff70;
}
.params tr {
    height: 14px;
}
.params tr:nth-child(odd) {
    height: 15px;
}
.params .narrow {
    font-size: 8px;
}
.c65 { width: 65px; }
.c125 { width: 125px; }
.c33 { width: 33px; }
.c42 { width: 42px; }
.c41 { width: 41px; }
.c30 { width: 30px; }
.c19 { width: 19px; }
.titleblock {
    height: 175px;
    display: flex;
    flex-direction: column;
    font: 9px "Liberation Sans", "Noto Sans CJK SC", sans-serif;
    color: #ffff70;
    fill: #ffff70;
    border: 1px solid #e8f080;
}
.upper {
    display: grid;
    grid-template-columns: 134px 1fr;
    grid-template-rows: 30px 1fr;
    height: 106px;
}
.brand {
    font: 200 23px/29px "DejaVu Sans", sans-serif;
    text-align: center;
    color: #f4f6c0;
    border-bottom: 1px solid #e8f080;
}
.figs {
    display: flex;
}
.fig {
    flex: 1;
}
.fig.a {
    display: flex;
    flex: 0 0 77px;
    border-right: 1px solid #e8f080;
}
.fig.a svg {
    width: 60px;
}
.fig.a span {
    width: 11px;
    padding-top: 17px;
    font-size: 10px;
    line-height: 11px;
}
.info {
    grid-column: 2;
    grid-row: 1 / 3;
    width: 131px;
    height: 107px;
    margin: -1px 0 0 0;
}
.info th {
    width: 35px;
}
.info .s {
    font-size: 8px;
}
.info td {
    font-size: 10px;
}
.signs {
    height: 22px;
    display: grid;
    grid-template-columns: 77px 78px 76px 1fr;
    border-top: 1px solid #e8f080;
}
.signs span {
    font-size: 10px;
    line-height: 22px;
    padding-left: 2px;
    border-right: 1px solid #e8f080;
}
.signs .pages {
    display: grid;
    padding: 0;
    border: 0;
}
.pages b {
    font-size: 9px;
    font-weight: 400;
    line-height: 10px;
    text-align: center;
}
.pages b + b {
    border-top: 1px solid #e8f080;
}
.note {
    height: 18px;
    display: flex;
    border-top: 1px solid #e8f080;
    line-height: 17px;
    font-size: 7px;
    white-space: nowrap;
}
.note span:first-child {
    flex: 1;
    text-align: center;
}
.note span:last-child {
    width: 54px;
    font-size: 10px;
    text-align: center;
    border-left: 1px solid #e8f080;
}
.code {
    flex: 1;
    display: flex;
    align-items: center;
    gap: 20px;
    padding-left: 14px;
    border-top: 1px solid #e8f080;
}
.drawing .bars {
    stroke: #ff1010;
    stroke-width: 18;
    stroke-dasharray: 1 1 4 1 6 1 1 1 2 1 3 2 1 1 7 1 2 1 1 2 5 1 9 1 2 2 1 1 3 1 8 1;
}

/* 页面标签 */
.pages-bar {
    height: 24px;
    margin-top: 3px;
    display: flex;
    background-color: #fdfdfd;
    border-top: 1px solid #ddd;
    font-size: 12px;
    font-weight: 600;
}
.arrows {
    width: 75px;
    height: 20px;
    display: flex;
    align-items: center;
    gap: 9px;
    padding-left: 5px;
}
.pages-bar .add {
    width: 21px;
    height: 19px;
    background-color: #eee;
    border: 1px solid #ccc;
    border-top: 0;
}
.pages-bar a {
    width: 53px;
    height: 19px;
    line-height: 17px;
    padding-left: 8px;
    background-color: #eee;
    border-bottom: 1px solid #ccc;
}
.pages-bar .on {
    padding-left: 6px;
    width: 51px;
    background-color: #fdfdfd;
    border-right: 1px solid #ccc;
}
.pages-bar .last {
    width: 73px;
    padding-left: 18px;
    border-right: 1px solid #ccc;
}

/* 状态栏 */
.status {
    height: 34px;
    display: flex;
    align-items: center;
    padding: 0 18px 0 4px;
    background-color: #eee;
    border-top: 2px solid #999;
}
.toggle {
    width: 25px;
    height: 22px;
    display: flex;
    align-items: center;
    justify-content: center;
    border: 1px solid #ccc;
}
.toggle:first-child {
    background-color: #e2e2e2;
}
.msg {
    width: 582px;
    display: flex;
    align-items: center;
    gap: 6px;
    padding-left: 17px;
    flex: none;
}
.msg i {
    width: 5px;
    height: 5px;
    border-radius: 50%;
    background-color: #277a5a;
}
.viewtools {
    display: flex;
    align-items: center;
    gap: 7px;
    width: 240px;
    padding-left: 5px;
    flex: none;
}
.sep {
    width: 1px;
    height: 26px;
    background-color: #ddd;
}
.dots {
    margin: 0 4px 0 8px;
}
.flag {
    margin-left: 6px;
}
.find {
    width: 40px;
    height: 24px;
    margin: 0 auto 0 26px;
    display: flex;
    align-items: center;
    justify-content: center;
    background: linear-gradient(#fff, #e2e2e2);
    border: 1px solid #aaa;
    border-radius: 3px;
}
.filter {
    width: 154px;
    height: 20px;
    padding: 0 6px;
    font: inherit;
    color: #333;
    border: 1px solid #ccc;
    appearance: none;
    background-color: #fff;
    background-image: linear-gradient(135deg, #777 50%, transparent 50%), linear-gradient(225deg, #777 50%, transparent 50%), linear-gradient(#ccc, #ccc);
    background-size: 4px 4px, 4px 4px, 1px 100%;
    background-position: right 3px top 8px, right 7px top 8px, right 14px top;
    background-repeat: no-repeat;
}

/* 任务栏 */
.taskbar {
    position: relative;
    height: 41px;
    display: flex;
    align-items: center;
    background-color: #2a406f;
    color: #fff;
}
.launch {
    width: 54px;
    display: flex;
    padding-left: 11px;
}
.launch.ie {
    width: 64px;
    padding-left: 10px;
}
.launch.chrome {
    width: 58px;
}
.task {
    width: 159px;
    height: 39px;
    display: flex;
    align-items: center;
    gap: 8px;
    padding-left: 11px;
    background-color: #53668f;
    border: 1px solid #8896b5;
}
.task.on {
    background: linear-gradient(to right, #8c96b2, #6d7a9e);
    border-color: #b8c0d2;
}
.tray {
    margin-left: auto;
    padding-right: 17px;
    display: flex;
    align-items: center;
    gap: 9px;
}
.ime {
    display: flex;
    flex-direction: column;
    width: 16px;
    font-size: 8px;
    line-height: 8px;
    text-align: center;
}
.ime b:first-child {
    background-color: #d22;
}
.ime b:last-child {
    color: #124;
    background-color: #fff;
}
.tray time {
    display: flex;
    flex-direction: column;
    align-items: center;
    line-height: 18px;
    padding-left: 6px;
}
.watermark {
    position: absolute;
    right: 18px;
    bottom: 2px;
    font: 18px/22px "DejaVu Sans", "Noto Sans CJK SC", sans-serif;
    color: #e01818;
    text-shadow: 1px 0 #fff, -1px 0 #fff, 0 1px #fff, 0 -1px #fff;
    white-space: nowrap;
}
```
